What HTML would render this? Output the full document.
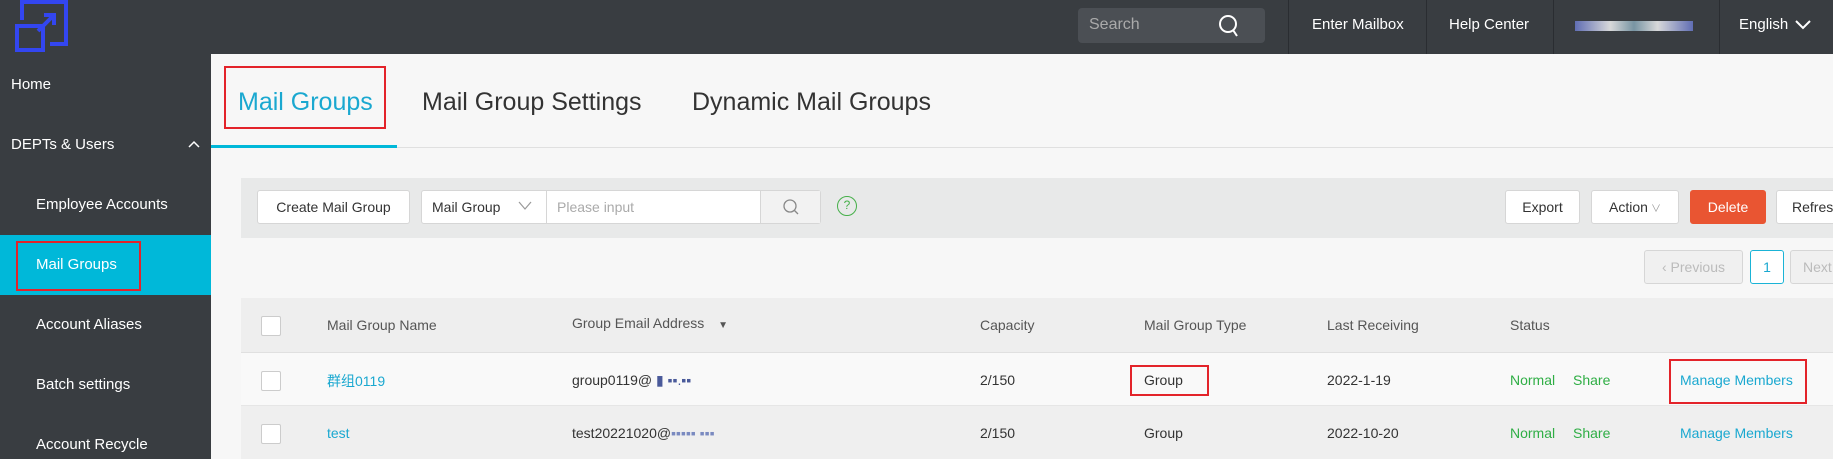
<!DOCTYPE html>
<html><head><meta charset="utf-8"><style>
*{margin:0;padding:0;box-sizing:border-box}
body{width:1833px;height:459px;overflow:hidden;background:#f7f7f7;font-family:"Liberation Sans","Noto Sans CJK SC",sans-serif;position:relative;color:#333}
.a{position:absolute;white-space:nowrap}
.top{left:0;top:0;width:1833px;height:54px;background:#393d41}
.side{left:0;top:54px;width:211px;height:405px;background:#393d41}
.nav{color:#fff;font-size:15px}
.div{top:0;width:1px;height:54px;background:#2a2d31}
.btn{background:#fff;border:1px solid #d6d6d6;border-radius:3px;font-size:14px;color:#333;display:flex;align-items:center;justify-content:center}
.th{font-size:14px;color:#555;top:317px}
.td{font-size:14px;color:#333}
.red{border:2px solid #e3232a}
</style></head><body>
<div class="a top"></div>
<svg class="a" style="left:0;top:0" width="80" height="56" viewBox="0 0 80 56"><g fill="none" stroke="#3346f0" stroke-width="4"><path d="M22 20V2H66V44H50"/><rect x="17" y="26" width="26" height="24"/><path d="M38 31L53 16M44 15H54V25"/></g></svg>
<div class="a" style="left:1078px;top:8px;width:187px;height:35px;background:#4b4f54;border-radius:4px"></div>
<div class="a" style="left:1089px;top:16px;color:#aaa;font-size:16px">Search</div>
<svg class="a" style="left:1217px;top:13px" width="24" height="26"><circle cx="11" cy="11" r="8" fill="none" stroke="#fff" stroke-width="2"/><path d="M16 17L20 23" stroke="#fff" stroke-width="2"/></svg>
<div class="a div" style="left:1288px"></div><div class="a div" style="left:1426px"></div><div class="a div" style="left:1553px"></div><div class="a div" style="left:1719px"></div>
<div class="a nav" style="left:1312px;top:16px">Enter Mailbox</div>
<div class="a nav" style="left:1449px;top:16px">Help Center</div>
<div class="a" style="left:1575px;top:21px;width:118px;height:10px;background:linear-gradient(90deg,#6a7ad0,#fff 30%,#8ab 50%,#fff 70%,#6a7ad0);opacity:.8"></div>
<div class="a nav" style="left:1739px;top:16px">English</div>
<svg class="a" style="left:1795px;top:19px" width="16" height="12"><path d="M1 2L8 9L15 2" fill="none" stroke="#fff" stroke-width="2"/></svg>
<div class="a side"></div>
<div class="a nav" style="left:11px;top:76px">Home</div>
<div class="a nav" style="left:11px;top:136px">DEPTs &amp; Users</div>
<svg class="a" style="left:188px;top:140px" width="12" height="10"><path d="M1 7L6 2L11 7" fill="none" stroke="#fff" stroke-width="1.5"/></svg>
<div class="a nav" style="left:36px;top:196px">Employee Accounts</div>
<div class="a" style="left:0;top:235px;width:211px;height:60px;background:#00b8d9"></div>
<div class="a red" style="left:16px;top:241px;width:125px;height:50px"></div>
<div class="a nav" style="left:36px;top:256px">Mail Groups</div>
<div class="a nav" style="left:36px;top:316px">Account Aliases</div>
<div class="a nav" style="left:36px;top:376px">Batch settings</div>
<div class="a nav" style="left:36px;top:436px">Account Recycle</div>
<div class="a" style="left:211px;top:147px;width:1622px;height:1px;background:#e0e0e0"></div>
<div class="a" style="left:211px;top:145px;width:186px;height:3px;background:#00b8d9"></div>
<div class="a red" style="left:224px;top:66px;width:162px;height:63px"></div>
<div class="a" style="left:238px;top:88px;font-size:25px;color:#1aa8d0">Mail Groups</div>
<div class="a" style="left:422px;top:88px;font-size:25px;color:#333">Mail Group Settings</div>
<div class="a" style="left:692px;top:88px;font-size:25px;color:#333">Dynamic Mail Groups</div>
<div class="a" style="left:241px;top:178px;width:1592px;height:60px;background:#e8e9e9"></div>
<div class="a btn" style="left:257px;top:190px;width:153px;height:34px">Create Mail Group</div>
<div class="a btn" style="left:421px;top:190px;width:400px;height:34px;justify-content:flex-start"></div>
<div class="a" style="left:432px;top:199px;font-size:14px;color:#333">Mail Group</div>
<svg class="a" style="left:518px;top:201px" width="14" height="10"><path d="M1 1L7 8L13 1" fill="none" stroke="#999" stroke-width="1.2"/></svg>
<div class="a" style="left:546px;top:191px;width:1px;height:32px;background:#d6d6d6"></div>
<div class="a" style="left:557px;top:199px;font-size:14px;color:#aaa">Please input</div>
<div class="a" style="left:760px;top:191px;width:60px;height:32px;background:#f2f2f2;border-left:1px solid #d6d6d6"></div>
<svg class="a" style="left:782px;top:198px" width="18" height="18"><circle cx="8" cy="8" r="6" fill="none" stroke="#888" stroke-width="1.3"/><path d="M12 12L16 16" stroke="#888" stroke-width="1.3"/></svg>
<div class="a" style="left:837px;top:196px;width:20px;height:20px;border:1.5px solid #46b04a;border-radius:50%;color:#46b04a;font-size:12px;text-align:center;line-height:17px">?</div>
<div class="a btn" style="left:1505px;top:190px;width:75px;height:34px">Export</div>
<div class="a btn" style="left:1591px;top:190px;width:88px;height:34px">Action <span style="font-size:10px;color:#999;margin-left:3px">∨</span></div>
<div class="a btn" style="left:1690px;top:190px;width:76px;height:34px;background:#e95532;border-color:#e95532;color:#fff">Delete</div>
<div class="a btn" style="left:1776px;top:190px;width:100px;height:34px;justify-content:flex-start;padding-left:15px">Refresh</div>
<div class="a btn" style="left:1644px;top:250px;width:99px;height:34px;background:#f0f0f0;color:#bbb">‹ Previous</div>
<div class="a btn" style="left:1750px;top:250px;width:34px;height:34px;border-color:#1ab3d6;color:#1aa8d0">1</div>
<div class="a btn" style="left:1790px;top:250px;width:80px;height:34px;background:#f0f0f0;color:#bbb;justify-content:flex-start;padding-left:12px">Next</div>
<div class="a" style="left:241px;top:298px;width:1592px;height:55px;background:#eeeeee;border-bottom:1px solid #e0e0e0"></div>
<div class="a" style="left:241px;top:353px;width:1592px;height:53px;background:#f9f9f9;border-bottom:1px solid #e6e6e6"></div>
<div class="a" style="left:241px;top:406px;width:1592px;height:53px;background:#efefef"></div>
<div class="a" style="left:261px;top:316px;width:20px;height:20px;background:#fff;border:1px solid #ccc;border-radius:2px"></div>
<div class="a" style="left:261px;top:371px;width:20px;height:20px;background:#fff;border:1px solid #ccc;border-radius:2px"></div>
<div class="a" style="left:261px;top:424px;width:20px;height:20px;background:#fff;border:1px solid #ccc;border-radius:2px"></div>
<div class="a th" style="left:327px">Mail Group Name</div>
<div class="a th" style="left:572px;top:315px">Group Email Address <span style="font-size:10px;margin-left:10px">▼</span></div>
<div class="a th" style="left:980px">Capacity</div>
<div class="a th" style="left:1144px">Mail Group Type</div>
<div class="a th" style="left:1327px">Last Receiving</div>
<div class="a th" style="left:1510px">Status</div>
<div class="a td" style="left:327px;top:371px;color:#1aa8d0">群组0119</div>
<div class="a td" style="left:572px;top:372px">group0119@ <span style="color:#4a5a9a">▮ ▪▪.▪▪</span></div>
<div class="a td" style="left:980px;top:372px">2/150</div>
<div class="a red" style="left:1130px;top:365px;width:79px;height:31px"></div>
<div class="a td" style="left:1144px;top:372px">Group</div>
<div class="a td" style="left:1327px;top:372px">2022-1-19</div>
<div class="a td" style="left:1510px;top:372px;color:#2fae45">Normal</div>
<div class="a td" style="left:1573px;top:372px;color:#2fae45">Share</div>
<div class="a red" style="left:1669px;top:359px;width:138px;height:45px"></div>
<div class="a td" style="left:1680px;top:372px;color:#1aa8d0">Manage Members</div>
<div class="a td" style="left:327px;top:425px;color:#1aa8d0">test</div>
<div class="a td" style="left:572px;top:425px">test20221020@<span style="color:#7a8ac0">▪▪▪▪▪ ▪▪▪</span></div>
<div class="a td" style="left:980px;top:425px">2/150</div>
<div class="a td" style="left:1144px;top:425px">Group</div>
<div class="a td" style="left:1327px;top:425px">2022-10-20</div>
<div class="a td" style="left:1510px;top:425px;color:#2fae45">Normal</div>
<div class="a td" style="left:1573px;top:425px;color:#2fae45">Share</div>
<div class="a td" style="left:1680px;top:425px;color:#1aa8d0">Manage Members</div>
</body></html>
